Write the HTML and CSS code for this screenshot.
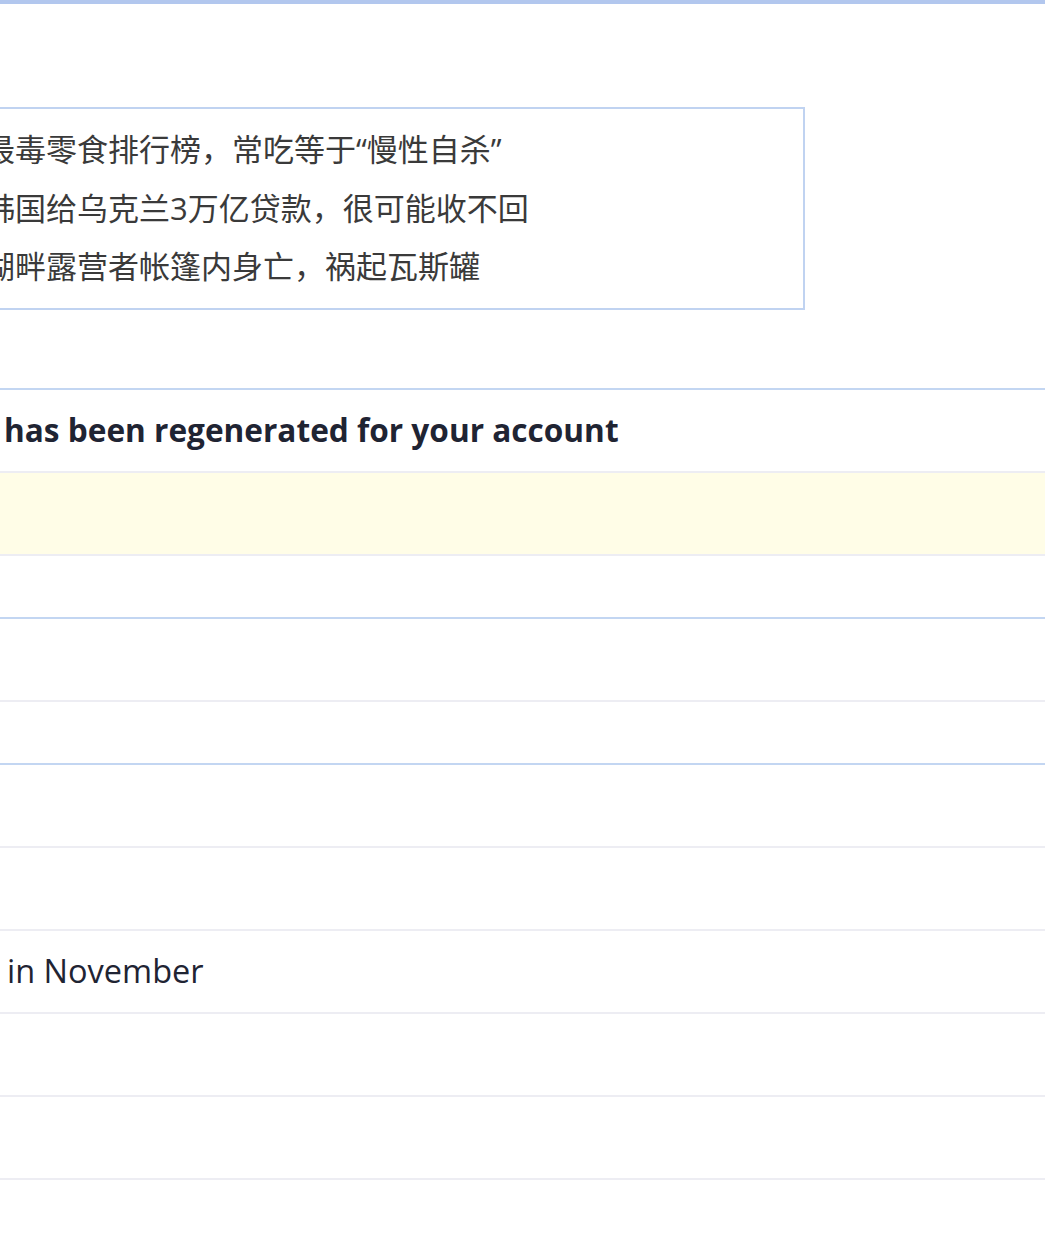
FILE: index.html
```html
<!DOCTYPE html>
<html lang="zh-CN">
<head>
<meta charset="utf-8">
<title>Notifications</title>
<link rel="stylesheet" href="styles.css">
</head>
<body>
<div class="topbar"></div>
<div class="page">
  <div class="news">
    <ul class="news-list">
      <li class="news-item">最毒零食排行榜，常吃等于“慢性自杀”</li>
      <li class="news-item">韩国给乌克兰3万亿贷款，很可能收不回</li>
      <li class="news-item">湖畔露营者帐篷内身亡，祸起瓦斯罐</li>
    </ul>
  </div>

  <div class="table">
    <div class="group">
      <div class="row"><span class="cell title">has been regenerated for your account</span></div>
      <div class="row highlight"></div>
      <div class="row short"></div>
    </div>
    <div class="group">
      <div class="row"></div>
      <div class="row short"></div>
    </div>
    <div class="group">
      <div class="row"></div>
      <div class="row"></div>
      <div class="row"><span class="cell detail">in November</span></div>
      <div class="row"></div>
      <div class="row"></div>
      <div class="row"></div>
    </div>
  </div>
</div>
</body>
</html>
```

FILE: styles.css
```css
html, body {
  margin: 0;
  padding: 0;
  background: #ffffff;
  overflow: hidden;
}

body {
  font-family: "Open Sans", "Noto Sans CJK SC", sans-serif;
  color: #1f2433;
}

.topbar {
  height: 4px;
  background: #b2c7ee;
}

.page {
  margin-left: -200px;
  width: 1245px;
}

.news {
  margin-top: 103px;
  width: 1001px;
  border: 2px solid #c0d3f1;
  padding: 11px 0 12px 0;
}

.news-list {
  list-style: none;
  margin: 0;
  padding: 0 0 0 182px;
}

.news-item {
  font-family: "Open Sans", "Noto Sans CJK SC", sans-serif;
  font-size: 31px;
  line-height: 58.5px;
  height: 58.5px;
  color: #3a3a3a;
  white-space: nowrap;
}

.table {
  margin-top: 78px;
}

.group {
  border-top: 2px solid #c3d6f2;
}

.row {
  height: 81px;
  display: flex;
  align-items: center;
  padding-left: 204px;
}

.row + .row {
  border-top: 2px solid #ededf3;
}

.row.short {
  height: 61px;
}

.row.highlight {
  background: #fffde7;
}

.cell {
  font-size: 32.5px;
  line-height: 1;
  white-space: nowrap;
  color: #1f2433;
}

.cell.detail {
  margin-left: 3px;
}

.cell.title {
  font-weight: 700;
  font-size: 31.6px;
}
```
